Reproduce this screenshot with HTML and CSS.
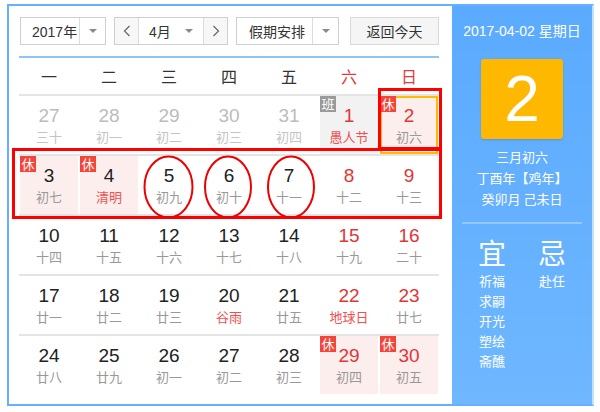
FILE: index.html
```html
<!DOCTYPE html>
<html lang="zh-CN">
<head>
<meta charset="utf-8">
<title>万年历</title>
<link rel="stylesheet" href="styles.css">
</head>
<body>
<div class="cal">
  <div class="main">
    <div class="toolbar">
      <div class="sel sel-year">
        <span class="sel-text">2017年</span>
        <span class="sel-arrow"><i class="tri"></i></span>
      </div>
      <div class="sel sel-month">
        <span class="nav nav-prev"><svg width="8" height="12" viewBox="0 0 8 12"><path d="M6.5 1 L1.5 6 L6.5 11" fill="none" stroke="#666" stroke-width="1.2"/></svg></span>
        <span class="month-mid"><span class="sel-text">4月</span><i class="tri"></i></span>
        <span class="nav nav-next"><svg width="8" height="12" viewBox="0 0 8 12"><path d="M1.5 1 L6.5 6 L1.5 11" fill="none" stroke="#666" stroke-width="1.2"/></svg></span>
      </div>
      <div class="sel sel-holiday">
        <span class="sel-text">假期安排</span>
        <span class="sel-arrow"><i class="tri"></i></span>
      </div>
      <button class="today-btn">返回今天</button>
    </div>

    <div class="week">
      <span>一</span><span>二</span><span>三</span><span>四</span><span>五</span><span class="we">六</span><span class="we">日</span>
    </div>

    <div class="rows">
      <div class="row">
        <div class="day prev"><span class="num">27</span><span class="lunar">三十</span></div>
        <div class="day prev"><span class="num">28</span><span class="lunar">初一</span></div>
        <div class="day prev"><span class="num">29</span><span class="lunar">初二</span></div>
        <div class="day prev"><span class="num">30</span><span class="lunar">初三</span></div>
        <div class="day prev"><span class="num">31</span><span class="lunar">初四</span></div>
        <div class="day we work"><span class="badge gray">班</span><span class="num">1</span><span class="lunar fest">愚人节</span></div>
        <div class="day we rest today"><span class="badge">休</span><span class="num">2</span><span class="lunar">初六</span></div>
      </div>
      <div class="row">
        <div class="day rest"><span class="badge">休</span><span class="num">3</span><span class="lunar">初七</span></div>
        <div class="day rest"><span class="badge">休</span><span class="num">4</span><span class="lunar fest">清明</span></div>
        <div class="day"><span class="num">5</span><span class="lunar">初九</span></div>
        <div class="day"><span class="num">6</span><span class="lunar">初十</span></div>
        <div class="day"><span class="num">7</span><span class="lunar">十一</span></div>
        <div class="day we"><span class="num">8</span><span class="lunar">十二</span></div>
        <div class="day we"><span class="num">9</span><span class="lunar">十三</span></div>
      </div>
      <div class="row">
        <div class="day"><span class="num">10</span><span class="lunar">十四</span></div>
        <div class="day"><span class="num">11</span><span class="lunar">十五</span></div>
        <div class="day"><span class="num">12</span><span class="lunar">十六</span></div>
        <div class="day"><span class="num">13</span><span class="lunar">十七</span></div>
        <div class="day"><span class="num">14</span><span class="lunar">十八</span></div>
        <div class="day we"><span class="num">15</span><span class="lunar">十九</span></div>
        <div class="day we"><span class="num">16</span><span class="lunar">二十</span></div>
      </div>
      <div class="row">
        <div class="day"><span class="num">17</span><span class="lunar">廿一</span></div>
        <div class="day"><span class="num">18</span><span class="lunar">廿二</span></div>
        <div class="day"><span class="num">19</span><span class="lunar">廿三</span></div>
        <div class="day"><span class="num">20</span><span class="lunar fest">谷雨</span></div>
        <div class="day"><span class="num">21</span><span class="lunar">廿五</span></div>
        <div class="day we"><span class="num">22</span><span class="lunar fest">地球日</span></div>
        <div class="day we"><span class="num">23</span><span class="lunar">廿七</span></div>
      </div>
      <div class="row">
        <div class="day"><span class="num">24</span><span class="lunar">廿八</span></div>
        <div class="day"><span class="num">25</span><span class="lunar">廿九</span></div>
        <div class="day"><span class="num">26</span><span class="lunar">初一</span></div>
        <div class="day"><span class="num">27</span><span class="lunar">初二</span></div>
        <div class="day"><span class="num">28</span><span class="lunar">初三</span></div>
        <div class="day we rest"><span class="badge">休</span><span class="num">29</span><span class="lunar">初四</span></div>
        <div class="day we rest"><span class="badge">休</span><span class="num">30</span><span class="lunar">初五</span></div>
      </div>
    </div>
  </div>

  <aside class="panel">
    <div class="p-date">2017-04-02 星期日</div>
    <div class="p-big">2</div>
    <div class="p-lunar">
      <div>三月初六</div>
      <div>丁酉年【鸡年】</div>
      <div>癸卯月 己未日</div>
    </div>
    <div class="p-line"></div>
    <div class="p-yj">
      <div class="p-col">
        <div class="p-head">宜</div>
        <div class="p-item">祈福</div>
        <div class="p-item">求嗣</div>
        <div class="p-item">开光</div>
        <div class="p-item">塑绘</div>
        <div class="p-item">斋醮</div>
      </div>
      <div class="p-col">
        <div class="p-head">忌</div>
        <div class="p-item">赴任</div>
      </div>
    </div>
  </aside>
</div>

<svg class="marks" width="600" height="412" viewBox="0 0 600 412">
  <rect x="379.5" y="89.5" width="61" height="59" fill="none" stroke="#f00" stroke-width="3"/>
  <rect x="13.5" y="149.5" width="427" height="68" fill="none" stroke="#f00" stroke-width="3"/>
  <ellipse cx="168.5" cy="187" rx="24" ry="30.5" fill="none" stroke="#e00" stroke-width="2"/>
  <ellipse cx="228" cy="187" rx="23" ry="30.5" fill="none" stroke="#e00" stroke-width="2"/>
  <ellipse cx="291" cy="187" rx="23" ry="30.5" fill="none" stroke="#e00" stroke-width="2"/>
</svg>
</body>
</html>
```

FILE: styles.css
```css
* { box-sizing: border-box; }

html, body {
  margin: 0;
  padding: 0;
  background: #fff;
}

body {
  position: relative;
  width: 600px;
  height: 412px;
  overflow: hidden;
  font-family: "Liberation Sans", "Noto Sans CJK SC", sans-serif;
  color: #333;
}

.cal {
  display: flex;
  margin: 4px 0 0 7px;
  width: 587px;
  height: 402px;
  border: 2px solid #68b0ff;
  border-right-color: #c4e0ff;
}

.main {
  width: 443px;
  padding: 11px 13px 0 10px;
}

/* toolbar */
.toolbar {
  display: flex;
  align-items: center;
  height: 28px;
  margin-left: 1px;
}

.sel {
  display: flex;
  height: 28px;
  border: 1px solid #cfcfcf;
  background: #fff;
  font-size: 14px;
  color: #333;
}

.sel-text {
  display: flex;
  align-items: center;
  font-family: "Liberation Sans", "Noto Sans CJK SC", sans-serif;
}

.sel-arrow {
  display: flex;
  align-items: center;
  justify-content: center;
  width: 26px;
  border-left: 1px solid #dcdcdc;
}

.tri {
  display: block;
  width: 0;
  height: 0;
  border-left: 4px solid transparent;
  border-right: 4px solid transparent;
  border-top: 4px solid #8a8a8a;
}

.sel-year { width: 86px; }
.sel-year .sel-text { width: 59px; padding-left: 11px; }

.sel-month { width: 114px; margin-left: 8px; }
.nav {
  display: flex;
  align-items: center;
  justify-content: center;
  width: 24px;
  background: #f7f7f7;
}
.nav-prev { border-right: 1px solid #dcdcdc; }
.nav-next { border-left: 1px solid #dcdcdc; }
.month-mid {
  flex: 1;
  display: flex;
  align-items: center;
  justify-content: space-between;
  padding: 0 10px 0 10px;
}

.sel-holiday { width: 103px; margin-left: 8px; }
.sel-holiday .sel-text { width: 76px; padding-left: 12px; }

.today-btn {
  margin-left: auto;
  width: 89px;
  height: 28px;
  border: 1px solid #dadada;
  background: #f5f5f5;
  font-family: "Noto Sans CJK SC", sans-serif;
  font-size: 14px;
  color: #333;
  padding: 0;
}

/* week header */
.week {
  display: grid;
  grid-template-columns: repeat(7, 60px);
  margin-top: 11px;
  height: 38px;
  border-top: 2px solid #8fc4f6;
  align-items: center;
  font-family: "Noto Sans CJK SC", sans-serif;
  font-size: 16px;
  color: #333;
  text-align: center;
}
.week .we { color: #e53a3a; }

/* rows */
.row {
  display: grid;
  grid-template-columns: repeat(7, 60px);
  height: 60px;
  border-top: 2px solid #e4e4e4;
}

.day {
  position: relative;
  display: flex;
  flex-direction: column;
  align-items: center;
  height: 58px;
  margin: 0 1px;
  padding-top: 8px;
}

.num {
  font-family: "Liberation Sans", sans-serif;
  font-size: 19px;
  line-height: 24px;
  color: #222;
}

.lunar {
  font-family: "Noto Sans CJK SC", sans-serif;
  font-size: 13px;
  line-height: 18px;
  color: #999;
}

.day.prev .num { color: #bcbcbc; }
.day.prev .lunar { color: #c4c4c4; }
.day.we .num { color: #e23535; }
.lunar.fest { color: #ef5050; }

.day.rest { background: #fdeeee; }
.day.work { background: #f2f2f2; }

.day.today {
  border: 2px solid #ffbc00;
  padding-top: 6px;
}

.badge {
  position: absolute;
  top: 0;
  left: 0;
  width: 16px;
  height: 16px;
  background: #f5443a;
  color: #fff;
  font-family: "Noto Sans CJK SC", sans-serif;
  font-size: 13px;
  line-height: 16px;
  text-align: center;
}
.badge.gray { background: #9a9a9a; }
.day.today .badge { top: -2px; left: -2px; }

/* right panel */
.panel {
  width: 140px;
  display: flex;
  flex-direction: column;
  align-items: center;
  padding-top: 15px;
  background: linear-gradient(#5aaaff, #6fb7ff);
  color: #fff;
  font-family: "Liberation Sans", "Noto Sans CJK SC", sans-serif;
}

.p-date {
  font-size: 14px;
  line-height: 20px;
  white-space: nowrap;
}

.p-big {
  margin-top: 18px;
  width: 82px;
  height: 80px;
  background: #ffb800;
  border-radius: 3px;
  box-shadow: 0 1px 2px rgba(0, 0, 0, 0.15);
  font-family: "Liberation Sans", sans-serif;
  font-size: 64px;
  line-height: 80px;
  text-align: center;
}

.p-lunar {
  margin-top: 7px;
  font-family: "Noto Sans CJK SC", sans-serif;
  font-size: 13px;
  line-height: 21px;
  text-align: center;
}

.p-line {
  margin-top: 13px;
  width: 120px;
  height: 2px;
  background: rgba(255, 255, 255, 0.3);
}

.p-yj {
  display: flex;
  width: 120px;
  margin-top: 11px;
}

.p-col {
  width: 60px;
  text-align: center;
  font-family: "Noto Sans CJK SC", sans-serif;
}

.p-head {
  font-size: 28px;
  line-height: 34px;
}

.p-item {
  font-size: 13px;
  line-height: 20px;
}
.p-head + .p-item { margin-top: 2px; }

/* annotation overlay */
.marks {
  position: absolute;
  left: 0;
  top: 0;
  pointer-events: none;
}
```
